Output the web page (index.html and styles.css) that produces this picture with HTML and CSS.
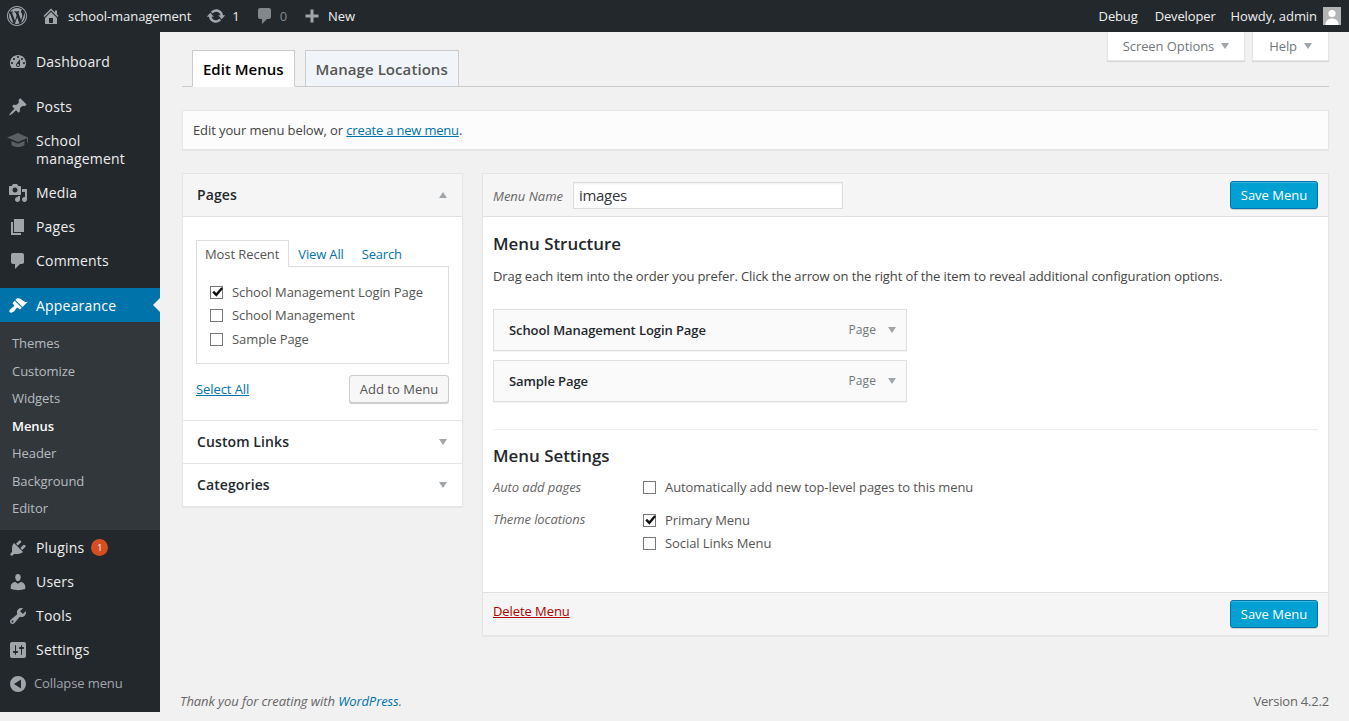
FILE: index.html
```html
<!DOCTYPE html>
<html lang="en">
<head>
<meta charset="utf-8">
<title>Menus</title>
<link rel="stylesheet" href="styles.css">
</head>
<body>
<header class="adminbar">
  <div class="bar-group bar-left">
    <a class="bar-item bar-wp"><svg class="bar-icon logo" viewBox="0 0 20 20"><path d="M20 10c0-5.52-4.48-10-10-10S0 4.48 0 10s4.48 10 10 10 10-4.48 10-10zM10 1.01c4.96 0 8.99 4.03 8.99 8.99s-4.03 8.99-8.99 8.99S1.01 14.96 1.01 10 5.04 1.01 10 1.01zM8.01 14.82L4.96 6.61c.49-.03 1.05-.08 1.05-.08.43-.05.38-1.01-.06-.99 0 0-1.29.1-2.13.1-.15 0-.33 0-.52-.01 1.44-2.17 3.9-3.6 6.7-3.6 2.09 0 3.99.79 5.41 2.09-.6-.08-1.45.35-1.45 1.42 0 .66.38 1.22.79 1.88.31.54.5 1.22.5 2.21 0 1.34-1.27 4.48-1.27 4.48l-2.71-7.5c.48-.03.75-.16.75-.16.43-.05.38-1.1-.05-1.08 0 0-1.3.11-2.14.11-.78 0-2.11-.11-2.11-.11-.43-.02-.48 1.06-.05 1.08l.84.08 1.12 3.04zm6.02 2.15L16.64 10s.67-1.69.39-3.81c.63 1.14.94 2.42.94 3.81 0 2.96-1.56 5.58-3.94 6.97zM2.68 6.77L6.5 17.25c-2.67-1.3-4.47-4.08-4.47-7.25 0-1.16.2-2.23.65-3.23zm7.45 4.53l2.29 6.25c-.75.27-1.57.42-2.42.42-.72 0-1.41-.11-2.06-.3z"/></svg></a>
    <a class="bar-item"><svg class="bar-icon" viewBox="0 0 20 20"><path d="M16 8.5l1.53 1.53-1.06 1.06L10 4.62l-6.47 6.47-1.06-1.06L10 2.5l4 4v-2h2v4zm-6-2.46l6 5.99V18H4v-5.97zM12 17v-5H8v5h4z"/></svg>school-management</a>
    <a class="bar-item bar-shift"><svg class="bar-icon" viewBox="0 0 20 20"><path d="M10.2 3.28c3.53 0 6.43 2.61 6.92 6h2.08l-3.5 4-3.5-4h2.32c-.45-1.97-2.21-3.45-4.32-3.45-1.45 0-2.73.71-3.54 1.78L4.95 5.66C6.23 4.2 8.11 3.28 10.2 3.28zm-.4 13.44c-3.52 0-6.43-2.61-6.92-6H.8l3.5-4c1.17 1.33 2.33 2.67 3.5 4H5.48c.45 1.97 2.21 3.45 4.32 3.45 1.45 0 2.73-.71 3.54-1.78l1.71 1.95c-1.28 1.46-3.15 2.38-5.25 2.38z"/></svg>1</a>
    <a class="bar-item bar-shift bar-dim"><svg class="bar-icon" viewBox="0 0 20 20"><path d="M5 2h9c1.1 0 2 .9 2 2v7c0 1.1-.9 2-2 2h-2l-5 5v-5H5c-1.1 0-2-.9-2-2V4c0-1.1.9-2 2-2z"/></svg>0</a>
    <a class="bar-item bar-shift"><svg class="bar-icon" viewBox="0 0 20 20"><path d="M17 7v3h-5v5H9v-5H4V7h5V2h3v5h5z" transform="translate(-.5 1.5)"/></svg>New</a>
  </div>
  <div class="bar-group">
    <a class="bar-item bar-tight bar-debug">Debug</a>
    <a class="bar-item bar-tight bar-dev">Developer</a>
    <a class="bar-item bar-user">Howdy, admin<span class="avatar"><svg viewBox="0 0 18 18"><rect width="18" height="18" fill="#b4b4b4"/><circle cx="9" cy="6.5" r="3.6" fill="#fff"/><path d="M2.5 18c0-4.5 3-6.5 6.5-6.5s6.500 2 6.500 6.500z" fill="#fff"/></svg></span></a>
  </div>
</header>

<div class="layout">
  <nav class="sidemenu">
    <ul class="menu">
      <li class="menu-item"><svg class="menu-icon" viewBox="0 0 20 20"><path fill-rule="evenodd" d="M3.76 16h12.48c1.1-1.37 1.76-3.11 1.76-5 0-4.42-3.58-8-8-8s-8 3.58-8 8c0 1.89.66 3.63 1.76 5zM10 4c.55 0 1 .45 1 1s-.45 1-1 1-1-.45-1-1 .45-1 1-1zM6 6c.55 0 1 .45 1 1s-.45 1-1 1-1-.45-1-1 .45-1 1-1zm8 0c.55 0 1 .45 1 1s-.45 1-1 1-1-.45-1-1 .45-1 1-1zm-5.37 5.55L12 7v6c0 1.1-.9 2-2 2s-2-.9-2-2c0-.57.24-1.08.63-1.45zM4 10c.55 0 1 .45 1 1s-.45 1-1 1-1-.45-1-1 .45-1 1-1zm12 0c.55 0 1 .45 1 1s-.45 1-1 1-1-.45-1-1 .45-1 1-1zm-5 3c0-.55-.45-1-1-1s-1 .45-1 1 .45 1 1 1 1-.45 1-1z"/></svg><span>Dashboard</span></li>
      <li class="menu-sep"></li>
      <li class="menu-item"><svg class="menu-icon" viewBox="0 0 20 20"><path d="M10.44 3.02l1.82-1.82 6.36 6.35-1.83 1.82c-1.05-.68-2.48-.57-3.41.36l-.75.75c-.92.93-1.04 2.35-.35 3.41l-1.83 1.82-2.41-2.41-2.8 2.79c-.42.42-3.38 2.71-3.8 2.29s1.86-3.39 2.28-3.81l2.79-2.79L4.1 9.36l1.83-1.82c1.05.69 2.48.57 3.4-.36l.75-.75c.93-.92 1.05-2.35.36-3.41z"/></svg><span>Posts</span></li>
      <li class="menu-item menu-tall"><svg class="menu-icon cap" viewBox="0 0 22 16"><path d="M11 1L0 5.500l11 4.500 9-3.700v4.200h1V5.500z"/><path d="M4.500 9v3.500c0 1.300 3 2.500 6.500 2.500s6.500-1.200 6.500-2.500V9L11 11.700z"/></svg><span>School<br>management</span></li>
      <li class="menu-item"><svg class="menu-icon" viewBox="0 0 20 20"><path fill-rule="evenodd" d="M13 11V4c0-.55-.45-1-1-1h-1.670L9 1H5L3.670 3H2c-.55 0-1 .45-1 1v7c0 .55.45 1 1 1h10c.55 0 1-.45 1-1zM7 4.500c1.380 0 2.500 1.120 2.500 2.500S8.380 9.500 7 9.500 4.500 8.380 4.500 7 5.620 4.500 7 4.500zM14 6h5v10.500c0 1.380-1.120 2.500-2.500 2.500S14 17.880 14 16.500s1.120-2.500 2.500-2.500c.17 0 .34.02.5.05V9h-3V6zm-4 8.050V13h2v3.500c0 1.380-1.120 2.500-2.500 2.500S7 17.880 7 16.500 8.120 14 9.500 14c.17 0 .34.02.5.05z"/></svg><span>Media</span></li>
      <li class="menu-item"><svg class="menu-icon" viewBox="0 0 20 20"><path d="M6 15V2h10v13H6zm-1 1h8v2H3V5h2v11z"/></svg><span>Pages</span></li>
      <li class="menu-item"><svg class="menu-icon" viewBox="0 0 20 20"><path d="M5 2h9c1.100 0 2 .9 2 2v7c0 1.100-.9 2-2 2h-2l-5 5v-5H5c-1.100 0-2-.9-2-2V4c0-1.100.9-2 2-2z"/></svg><span>Comments</span></li>
      <li class="menu-sep"></li>
      <li class="menu-item menu-current"><svg class="menu-icon" viewBox="0 0 20 20"><path d="M14.480 11.060L7.410 3.990l1.500-1.500c.5-.56 2.300-.47 3.510.32 1.210.8 1.430 1.280 2.910 2.100 1.180.64 2.450 1.260 4.450.85zm-.71.71L6.700 4.700 4.930 6.470c-.39.39-.39 1.020 0 1.410l1.060 1.060c.39.39.39 1.030 0 1.420-.6.6-1.430 1.110-2.210 1.690-.35.26-.7.53-1.010.84C1.430 13.230.91 15.240 1.820 16.170c.92.92 2.940.4 4.290-.95.31-.31.58-.66.84-1.010.58-.78 1.090-1.610 1.690-2.210.39-.39 1.020-.39 1.410 0l1.060 1.060c.39.39 1.020.39 1.410 0z"/></svg><span>Appearance</span></li>
      <li>
        <ul class="submenu">
          <li>Themes</li>
          <li>Customize</li>
          <li>Widgets</li>
          <li class="submenu-current">Menus</li>
          <li>Header</li>
          <li>Background</li>
          <li>Editor</li>
        </ul>
      </li>
      <li class="menu-item"><svg class="menu-icon" viewBox="0 0 20 20"><path d="M13.110 4.360L9.870 7.600 8 5.730l3.240-3.240c.35-.34 1.050-.2 1.560.32.52.51.66 1.210.31 1.550zm-8 1.770l.91-1.120 9.010 9.010-1.190.84c-.71.71-2.630 1.160-3.820 1.160H6.140L4.900 17.260c-.59.59-1.540.59-2.120 0-.59-.58-.59-1.530 0-2.120l1.240-1.240v-3.880c0-1.130.4-3.190 1.090-3.890zm7.260 3.970l3.240-3.240c.34-.35 1.040-.21 1.550.31.52.51.66 1.210.31 1.550l-3.240 3.250z"/></svg><span>Plugins</span><b class="badge">1</b></li>
      <li class="menu-item"><svg class="menu-icon" viewBox="0 0 20 20"><path d="M10 9.250c-2.270 0-2.730-3.440-2.730-3.440C7 4.020 7.820 2 9.970 2c2.160 0 2.980 2.020 2.710 3.810 0 0-.41 3.440-2.680 3.440zm0 2.570L12.720 10c2.390 0 4.520 2.330 4.520 4.530v2.490s-3.650 1.130-7.240 1.130c-3.650 0-7.240-1.130-7.240-1.130v-2.490c0-2.250 1.940-4.480 4.470-4.480z"/></svg><span>Users</span></li>
      <li class="menu-item"><svg class="menu-icon" viewBox="0 0 20 20"><path fill-rule="evenodd" d="M16.680 9.770c-1.340 1.340-3.300 1.670-4.950.99l-5.410 6.520c-.99.99-2.590.99-3.580 0s-.99-2.590 0-3.570l6.520-5.420c-.68-1.650-.35-3.610.99-4.950 1.280-1.280 3.120-1.620 4.720-1.060l-2.890 2.890 2.820 2.820 2.860-2.870c.53 1.580.18 3.390-1.080 4.650zM3.810 16.210c.4.39 1.040.39 1.430 0 .4-.4.4-1.040 0-1.430-.39-.4-1.030-.4-1.430 0-.39.39-.39 1.030 0 1.430z"/></svg><span>Tools</span></li>
      <li class="menu-item"><svg class="menu-icon" viewBox="0 0 20 20"><path fill-rule="evenodd" d="M18 16V4c0-1.100-.9-2-2-2H4c-1.100 0-2 .9-2 2v12c0 1.100.9 2 2 2h12c1.100 0 2-.9 2-2zM8 11h1c.55 0 1 .45 1 1s-.45 1-1 1H8v1.500c0 .28-.22.5-.5.5s-.5-.22-.5-.5V13H6c-.55 0-1-.45-1-1s.45-1 1-1h1V5.500c0-.28.22-.5.5-.5s.5.22.5.5V11zm5-2h-1c-.55 0-1-.45-1-1s.45-1 1-1h1V5.500c0-.28.22-.5.5-.5s.5.22.5.5V7h1c.55 0 1 .45 1 1s-.45 1-1 1h-1v5.500c0 .28-.22.5-.5.5s-.5-.22-.5-.5V9z"/></svg><span>Settings</span></li>
      <li class="menu-item menu-collapse"><svg class="menu-icon" viewBox="0 0 20 20"><path fill-rule="evenodd" d="M10 2a8 8 0 1 0 0 16 8 8 0 0 0 0-16zm3 3.500v9L6 10z"/></svg><span>Collapse menu</span></li>
    </ul>
  </nav>

  <div class="main">
    <div class="wrap">
      <div class="tabs-row">
        <div class="nav-tabs">
          <a class="nav-tab nav-tab-active">Edit Menus</a>
          <a class="nav-tab">Manage Locations</a>
        </div>
        <div class="screen-links">
          <a class="screen-link">Screen Options<i class="arrow-down"></i></a>
          <a class="screen-link screen-link-help">Help<i class="arrow-down"></i></a>
        </div>
      </div>

      <div class="notice">Edit your menu below, or <a class="link notice-link">create a new menu</a>.</div>

      <div class="columns">
        <aside class="accordion">
          <section class="acc-section">
            <h3 class="acc-title">Pages<i class="arrow-up"></i></h3>
            <div class="acc-body">
              <div class="mini-tabs">
                <span class="mini-tab mini-tab-active">Most Recent</span>
                <a class="mini-tab mini-link">View All</a>
                <a class="mini-tab mini-link">Search</a>
              </div>
              <div class="mini-panel">
                <label class="check-row"><span class="box"><svg viewBox="0 0 16 16"><path d="M2.500 8l1.800-1.800L6.700 8.600 12 2.500l1.800 1.500L6.800 12.500z"/></svg></span>School Management Login Page</label>
                <label class="check-row"><span class="box"></span>School Management</label>
                <label class="check-row"><span class="box"></span>Sample Page</label>
              </div>
              <div class="acc-actions">
                <a class="link">Select All</a>
                <button class="btn" type="button">Add to Menu</button>
              </div>
            </div>
          </section>
          <section class="acc-section"><h3 class="acc-title acc-closed">Custom Links<i class="arrow-down"></i></h3></section>
          <section class="acc-section"><h3 class="acc-title acc-closed">Categories<i class="arrow-down"></i></h3></section>
        </aside>

        <section class="editor">
          <div class="editor-head">
            <label class="name-label">Menu Name</label>
            <input class="name-input" type="text" value="images">
            <button class="btn-primary" type="button">Save Menu</button>
          </div>
          <div class="editor-body">
            <h3 class="ed-title">Menu Structure</h3>
            <p class="ed-desc">Drag each item into the order you prefer. Click the arrow on the right of the item to reveal additional configuration options.</p>
            <ul class="menu-items">
              <li class="menu-row"><strong>School Management Login Page</strong><span class="row-type">Page</span><i class="arrow-down"></i></li>
              <li class="menu-row"><strong>Sample Page</strong><span class="row-type">Page</span><i class="arrow-down"></i></li>
            </ul>
            <div class="settings">
              <h3 class="ed-title">Menu Settings</h3>
              <div class="set-grid">
                <span class="set-label">Auto add pages</span>
                <div class="set-options">
                  <label class="check-row"><span class="box"></span>Automatically add new top-level pages to this menu</label>
                </div>
                <span class="set-label set-label-theme">Theme locations</span>
                <div class="set-options">
                  <label class="check-row"><span class="box"><svg viewBox="0 0 16 16"><path d="M2.500 8l1.800-1.800L6.700 8.600 12 2.500l1.800 1.500L6.800 12.500z"/></svg></span>Primary Menu</label>
                  <label class="check-row"><span class="box"></span>Social Links Menu</label>
                </div>
              </div>
            </div>
          </div>
          <div class="editor-foot">
            <a class="delete">Delete Menu</a>
            <button class="btn-primary" type="button">Save Menu</button>
          </div>
        </section>
      </div>
    </div>
    <footer class="footer">
      <span class="thanks">Thank you for creating with <a class="plain-link">WordPress</a>.</span>
      <span class="version">Version 4.2.2</span>
    </footer>
  </div>
</div>
</body>
</html>
```

FILE: styles.css
```css
* { box-sizing: border-box; }
html, body { margin: 0; padding: 0; height: 721px; overflow: hidden; }
body { background: #f1f1f1; color: #444; font-family: "Open Sans", sans-serif; font-size: 13px; line-height: 1.4; letter-spacing: -.08px; }
ul { list-style: none; margin: 0; padding: 0; }
h3, p { margin: 0; }
i { display: inline-block; }

.adminbar { display: flex; justify-content: space-between; height: 32px; background: #23282d; color: #eee; letter-spacing: -.06px; }
.bar-group { display: flex; }
.bar-item { display: flex; align-items: center; gap: 7px; padding: 0 7px; font-size: 13px; color: #eee; white-space: nowrap; }
.bar-icon { width: 20px; height: 20px; fill: #a0a5aa; }
.bar-wp { padding: 0 7px; }
.bar-wp .logo { width: 20px; height: 20px; }
.bar-shift { padding-left: 8px; gap: 6px; }
.bar-dim { color: #82878c; gap: 5px; }
.bar-dim .bar-icon { fill: #82878c; }
.bar-tight { letter-spacing: -.14px; }
.bar-debug { margin-right: 3px; }
.bar-dev { margin-right: 1px; }
.bar-user { gap: 6px; padding-right: 8px; }
.avatar { width: 18px; height: 18px; display: block; }
.avatar svg { display: block; width: 18px; height: 18px; }

.layout { display: flex; height: 689px; }
.sidemenu { flex: 0 0 160px; height: 680px; background: #23282d; padding-top: 12px; }
.menu-item { display: flex; align-items: center; height: 34px; padding-left: 36px; position: relative; font-size: 14px; line-height: 18px; color: #eee; letter-spacing: .2px; }
.menu-item > span { padding-top: 2px; }
.menu-tall { height: 52px; }
.menu-icon { position: absolute; left: 8px; top: 8px; width: 20px; height: 20px; fill: #a0a5aa; }
.cap { left: 7px; top: 9px; width: 22px; height: 16px; fill: #5a5f63; }
.menu-sep { height: 11px; }
.menu-current { background: #0073aa; color: #fff; }
.menu-current .menu-icon { fill: #fff; }
.menu-current::after { content: ""; position: absolute; right: 0; top: 10px; border: 7px solid transparent; border-right-color: #f1f1f1; border-left-width: 0; border-right-width: 7px; }
.submenu { background: #32373c; padding: 8px 0 7px; font-size: 13px; color: rgba(240,245,250,.7); letter-spacing: -.05px; }
.submenu li { height: 27.5px; line-height: 27.5px; padding-left: 12px; }
.submenu-current { color: #fff; font-weight: 600; }
.badge { margin: 2px 0 0 7px; width: 17px; height: 17px; border-radius: 50%; background: #d54e21; color: #fff; font-size: 9px; font-weight: 400; line-height: 17px; text-align: center; letter-spacing: 0; }
.menu-collapse { color: #a0a5aa; font-size: 13px; padding-left: 34px; letter-spacing: -.1px; }
.menu-collapse > span { padding-top: 0; }

.main { flex: 1; display: flex; flex-direction: column; justify-content: space-between; min-width: 0; padding-left: 20px; padding-right: 20px; height: 689px; }
.wrap { margin-left: 2px; }
.tabs-row { display: flex; justify-content: space-between; height: 55px; border-bottom: 1px solid #ccc; }
.nav-tabs { display: flex; align-items: flex-end; padding-left: 10px; gap: 10px; }
.nav-tab { display: block; height: 37px; margin-bottom: -1px; padding: 6px 10px; font-size: 15px; line-height: 24px; font-weight: 600; color: #555; background: #f1f5f9; border: 1px solid #ccc; letter-spacing: .07px; }
.nav-tab-active { background: #fff; color: #000; border-bottom-color: #fff; letter-spacing: 0; }
.screen-links { display: flex; gap: 7px; align-items: flex-start; }
.screen-link { display: flex; align-items: center; gap: 7px; height: 29px; padding: 0 15px; background: #fff; color: #72777c; font-size: 13px; box-shadow: 0 1px 1px rgba(0,0,0,.1); border: 1px solid #e5e5e5; border-top: 0; }
.screen-link-help { padding: 0 16px; }
.arrow-down { width: 0; height: 0; border: 4px solid transparent; border-top: 6px solid #a0a5aa; border-bottom: 0; }
.arrow-up { width: 0; height: 0; border: 4px solid transparent; border-bottom: 6px solid #a0a5aa; border-top: 0; }

.link { color: #0073aa; text-decoration: underline; }
.notice { margin-top: 23px; height: 40px; padding: 0 10px; line-height: 38px; background: #fcfcfc; border: 1px solid #e5e5e5; box-shadow: 0 1px 1px rgba(0,0,0,.04); letter-spacing: -.1px; }
.notice-link { letter-spacing: -.2px; }

.columns { display: flex; gap: 19px; align-items: flex-start; margin-top: 23px; }
.accordion { flex: 0 0 281px; border: 1px solid #e5e5e5; box-shadow: 0 1px 1px rgba(0,0,0,.04); background: #fff; }
.acc-title { display: flex; justify-content: space-between; align-items: center; height: 43px; padding: 0 15px 0 14px; font-size: 14px; font-weight: 600; color: #23282d; background: #f5f5f5; border-bottom: 1px solid #e1e1e1; letter-spacing: .1px; }
.acc-closed { background: #fff; border-bottom: 1px solid #e5e5e5; height: 43px; }
.acc-section:last-child .acc-closed { border-bottom: 0; height: 42px; }
.acc-body { padding: 23px 13px 17px; border-bottom: 1px solid #e5e5e5; background: #fff; }
.mini-tabs { display: flex; height: 27px; font-size: 13px; }
.mini-tab { padding: 5px 9px 0 8px; line-height: 18px; }
.mini-tab-active { border: 1px solid #ddd; border-bottom: 0; background: #fff; position: relative; z-index: 1; margin-bottom: -1px; color: #555; height: 27px; padding-top: 4px; }
.mini-link { color: #0073aa; padding-left: 9px; padding-right: 9px; letter-spacing: -.15px; }
.mini-panel { height: 98px; padding: 13.3px 14px 0 13px; border: 1px solid #ddd; margin-top: -1px; background: #fff; }
.check-row { display: flex; align-items: center; gap: 9px; height: 23.5px; color: #555; font-size: 13px; }
.box { flex: 0 0 13px; width: 13px; height: 13px; border: 1px solid #777; background: #fff; display: block; position: relative; }
.box svg { position: absolute; left: -1px; top: -2px; width: 15px; height: 15px; fill: #111; }
.acc-actions { display: flex; justify-content: space-between; align-items: center; margin-top: 11px; }
.btn { height: 28px; width: 100px; padding: 0; background: #f7f7f7; border: 1px solid #ccc; border-radius: 3px; color: #555; font: 13px "Open Sans", sans-serif; box-shadow: 0 1px 0 #ccc; }

.editor { flex: 1; min-width: 0; border: 1px solid #e5e5e5; background: #fff; box-shadow: 0 1px 1px rgba(0,0,0,.04); }
.editor-head { display: flex; align-items: center; height: 43px; padding: 0 10px; background: #f5f5f5; border-bottom: 1px solid #dfdfdf; }
.name-label { font-style: italic; color: #666; margin-right: 10px; padding-top: 2px; letter-spacing: 0; }
.name-input { width: 270px; height: 27px; padding: 2px 5px; border: 1px solid #ddd; background: #fff; font: 15px "Open Sans", sans-serif; letter-spacing: -.3px; color: #32373c; box-shadow: inset 0 1px 2px rgba(0,0,0,.07); }
.btn-primary { margin-left: auto; height: 28px; width: 88px; padding: 0; background: #00a0d2; border: 1px solid #0073aa; border-radius: 3px; color: #fff; font: 13px "Open Sans", sans-serif; box-shadow: inset 0 1px 0 rgba(120,200,230,.5), 0 1px 0 rgba(0,0,0,.15); }
.editor-body { height: 359px; padding: 0 10px; }
.ed-title { font-size: 16.9px; font-weight: 600; color: #23282d; line-height: 22px; letter-spacing: 0; }
.editor-body > .ed-title { margin-top: 16px; }
.ed-desc { margin-top: 11px; line-height: 20px; color: #444; letter-spacing: -.11px; }
.menu-items { margin-top: 23px; }
.menu-row { display: flex; align-items: center; width: 414px; height: 42px; margin-bottom: 9px; padding: 0 10px 0 15px; background: #fafafa; border: 1px solid #dfdfdf; box-shadow: 0 1px 1px rgba(0,0,0,.04); }
.menu-row strong { font-weight: 600; font-size: 13px; color: #23282d; }
.row-type { margin-left: auto; margin-right: 12px; color: #72777c; font-size: 12px; letter-spacing: .1px; }
.settings { margin-top: 27px; padding-top: 15px; border-top: 1px solid #eee; }
.set-grid { display: grid; grid-template-columns: 150px 1fr; row-gap: 9px; margin-top: 9px; }
.set-label { font-style: italic; color: #666; font-size: 13px; line-height: 23.5px; }
.set-label-theme { margin-top: -1px; }
.set-options { display: block; }
.set-options .check-row { height: 23px; }
.editor-foot { display: flex; align-items: center; height: 43px; padding: 0 10px; background: #f5f5f5; border-top: 1px solid #dfdfdf; }
.delete { color: #a00; text-decoration: underline; padding-bottom: 6px; }

.footer { display: flex; justify-content: space-between; padding-bottom: 10px; font-size: 13px; color: #666; height: 29px; }
.thanks { font-style: italic; }
.version { letter-spacing: -.2px; }
.plain-link { color: #0073aa; }
```
